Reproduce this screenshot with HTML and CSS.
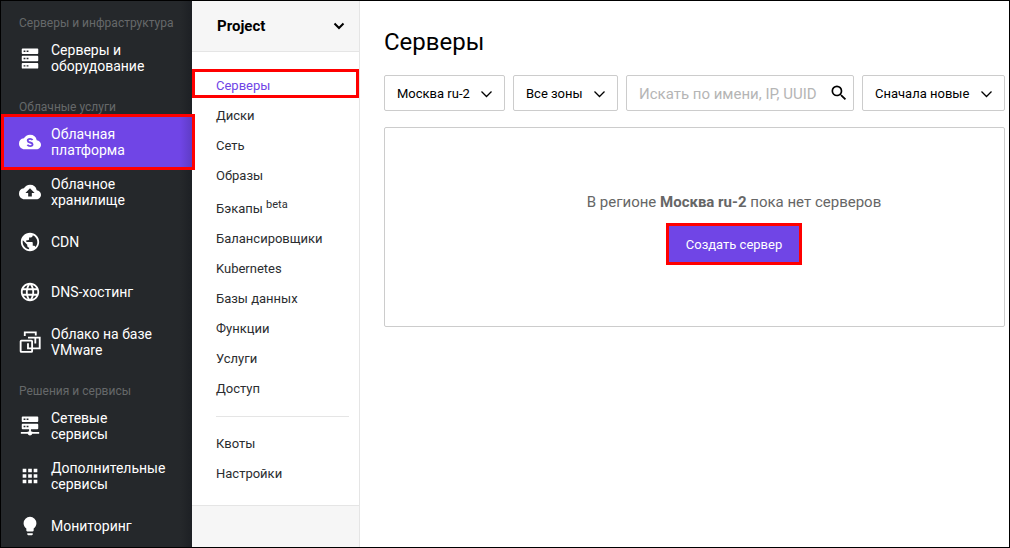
FILE: index.html
```
<!DOCTYPE html>
<html lang="ru">
<head>
<meta charset="utf-8">
<title>Серверы</title>
<link rel="stylesheet" href="styles.css">
</head>
<body>
<div class="app">
  <nav class="sidebar" aria-label="Разделы">
    <h2 class="sidebar-title">Серверы и инфраструктура</h2>
    <a class="side-link" href="#">
      <svg class="side-icon" viewBox="0 0 24 24"><path d="M4 1.500h16a1 1 0 0 1 1 1v4a1 1 0 0 1-1 1H4a1 1 0 0 1-1-1v-4a1 1 0 0 1 1-1zM4 9.500h16a1 1 0 0 1 1 1v4a1 1 0 0 1-1 1H4a1 1 0 0 1-1-1v-4a1 1 0 0 1 1-1zM4 17.500h16a1 1 0 0 1 1 1v4a1 1 0 0 1-1 1H4a1 1 0 0 1-1-1v-4a1 1 0 0 1 1-1z"/><path class="hole" d="M5 3.800h2v1.600H5zM8.300 3.800h2v1.600h-2zM5 11.800h2v1.600H5zM8.300 11.800h2v1.600h-2zM5 19.800h2v1.600H5zM8.300 19.800h2v1.600h-2z"/></svg>
      <span>Серверы и оборудование</span>
    </a>
    <h2 class="sidebar-title">Облачные услуги</h2>
    <a class="side-link side-link-active" href="#" aria-current="true">
      <svg class="side-icon" viewBox="0 0 24 24"><path d="M19.350 10.040A7.490 7.490 0 0 0 12 4C9.110 4 6.600 5.640 5.350 8.040A5.994 5.994 0 0 0 0 14c0 3.310 2.690 6 6 6h13c2.760 0 5-2.240 5-5 0-2.640-2.050-4.780-4.650-4.960z"/><path class="mark" d="M14.800 9.900c-.6-.9-1.600-1.300-2.700-1.300-1.600 0-2.600.8-2.600 1.900 0 2.600 5.300 1.500 5.300 4 0 1.100-1.100 2-2.700 2-1.300 0-2.300-.5-2.900-1.500"/></svg>
      <span>Облачная платформа</span>
    </a>
    <a class="side-link" href="#">
      <svg class="side-icon" viewBox="0 0 24 24"><path d="M19.350 10.040A7.490 7.490 0 0 0 12 4C9.110 4 6.600 5.640 5.350 8.040A5.994 5.994 0 0 0 0 14c0 3.310 2.690 6 6 6h13c2.760 0 5-2.240 5-5 0-2.640-2.050-4.780-4.650-4.960zM14 13v4h-4v-4H7l5-5 5 5h-3z"/></svg>
      <span>Облачное хранилище</span>
    </a>
    <a class="side-link" href="#">
      <svg class="side-icon" viewBox="0 0 24 24"><path d="M12 2C6.480 2 2 6.480 2 12s4.480 10 10 10 10-4.480 10-10S17.520 2 12 2zm-1 17.930c-3.950-.49-7-3.850-7-7.930 0-.62.080-1.210.210-1.790L9 15v1c0 1.100.9 2 2 2v1.930zm6.900-2.540c-.26-.81-1-1.390-1.900-1.390h-1v-3c0-.55-.45-1-1-1H8v-2h2c.55 0 1-.45 1-1V7h2c1.100 0 2-.9 2-2v-.41c2.930 1.190 5 4.060 5 7.410 0 2.080-.8 3.970-2.100 5.390z"/></svg>
      <span>CDN</span>
    </a>
    <a class="side-link" href="#">
      <svg class="side-icon" viewBox="0 0 24 24"><path d="M11.990 2C6.470 2 2 6.480 2 12s4.470 10 9.990 10C17.520 22 22 17.520 22 12S17.520 2 11.990 2zm6.930 6h-2.950a15.650 15.650 0 0 0-1.380-3.560A8.030 8.030 0 0 1 18.920 8zM12 4.040c.83 1.200 1.480 2.530 1.910 3.960h-3.820c.43-1.430 1.080-2.760 1.910-3.960zM4.260 14C4.100 13.360 4 12.690 4 12s.1-1.360.26-2h3.380c-.08.66-.14 1.320-.14 2s.06 1.340.14 2H4.260zm.82 2h2.950c.32 1.250.78 2.450 1.380 3.560A7.987 7.987 0 0 1 5.080 16zm2.950-8H5.080a7.987 7.987 0 0 1 4.330-3.560A15.650 15.650 0 0 0 8.030 8zM12 19.960c-.83-1.200-1.480-2.530-1.910-3.960h3.820c-.43 1.430-1.080 2.760-1.910 3.960zM14.340 14H9.660c-.09-.66-.16-1.320-.16-2s.07-1.350.16-2h4.680c.09.65.16 1.320.16 2s-.07 1.340-.16 2zm.25 5.560c.6-1.110 1.060-2.310 1.380-3.560h2.950a8.030 8.030 0 0 1-4.330 3.560zM16.360 14c.08-.66.14-1.320.14-2s-.06-1.340-.14-2h3.380c.16.64.26 1.310.26 2s-.1 1.360-.26 2h-3.380z"/></svg>
      <span>DNS-хостинг</span>
    </a>
    <a class="side-link" href="#">
      <svg class="side-icon" viewBox="0 0 24 24"><g class="line"><path d="M6.300 5.500V1.500H18.300V5"/><rect x="1.800" y="10.500" width="12.500" height="12.300" rx=".8"/><path d="M9.800 7.300H22.600V19H9.800V13.300M17.800 7.300V13.500"/></g></svg>
      <span>Облако на базе VMware</span>
    </a>
    <h2 class="sidebar-title">Решения и сервисы</h2>
    <a class="side-link" href="#">
      <svg class="side-icon" viewBox="0 0 24 24"><path d="M4 1.500h16a1 1 0 0 1 1 1v4a1 1 0 0 1-1 1H4a1 1 0 0 1-1-1v-4a1 1 0 0 1 1-1zM4 9.500h16a1 1 0 0 1 1 1v4a1 1 0 0 1-1 1h-7v2.500h1.500v.5H22v2h-7.500a2.600 2.600 0 0 1-5 0H2v-2h7.500v-.5H11v-2.500H4a1 1 0 0 1-1-1v-4a1 1 0 0 1 1-1z"/><path class="hole" d="M5 3.800h2v1.600H5zM8.300 3.800h2v1.600h-2zM5 11.800h2v1.600H5zM8.300 11.800h2v1.600h-2z"/></svg>
      <span>Сетевые сервисы</span>
    </a>
    <a class="side-link" href="#">
      <svg class="side-icon" viewBox="0 0 24 24"><path d="M4 8h4V4H4v4zm6 12h4v-4h-4v4zm-6 0h4v-4H4v4zm0-6h4v-4H4v4zm6 0h4v-4h-4v4zm6-10v4h4V4h-4zm-6 4h4V4h-4v4zm6 6h4v-4h-4v4zm0 6h4v-4h-4v4z"/></svg>
      <span>Дополнительные сервисы</span>
    </a>
    <a class="side-link" href="#">
      <svg class="side-icon" viewBox="0 0 24 24"><path d="M9 21c0 .55.45 1 1 1h4c.55 0 1-.45 1-1v-1H9v1zm3-19a7 7 0 0 0-7 7c0 2.380 1.190 4.470 3 5.740V17c0 .55.45 1 1 1h6c.55 0 1-.45 1-1v-2.260c1.810-1.270 3-3.360 3-5.740a7 7 0 0 0-7-7z"/></svg>
      <span>Мониторинг</span>
    </a>
  </nav>

  <aside class="project">
    <button class="project-switch" type="button">
      <span>Project</span>
      <svg class="project-arrow" viewBox="0 0 12 12"><path d="M1.500 3.500 6 8l4.500-4.500"/></svg>
    </button>
    <nav class="menu" aria-label="Project">
      <a class="menu-link menu-link-active" href="#" aria-current="page">Серверы</a>
      <a class="menu-link" href="#">Диски</a>
      <a class="menu-link" href="#">Сеть</a>
      <a class="menu-link" href="#">Образы</a>
      <a class="menu-link menu-link-beta" href="#">Бэкапы <sup class="beta">beta</sup></a>
      <a class="menu-link" href="#">Балансировщики</a>
      <a class="menu-link" href="#">Kubernetes</a>
      <a class="menu-link" href="#">Базы данных</a>
      <a class="menu-link" href="#">Функции</a>
      <a class="menu-link" href="#">Услуги</a>
      <a class="menu-link" href="#">Доступ</a>
      <hr class="menu-divider">
      <a class="menu-link" href="#">Квоты</a>
      <a class="menu-link" href="#">Настройки</a>
    </nav>
  </aside>

  <main class="content">
    <h1 class="title">Серверы</h1>
    <div class="filters">
      <div class="field">
        <select class="select" aria-label="Регион"><option>Москва ru-2</option></select>
        <svg class="select-arrow" viewBox="0 0 12 12"><path d="M1.500 3.500 6.500 8.500l5-5"/></svg>
      </div>
      <div class="field">
        <select class="select" aria-label="Зона"><option>Все зоны</option></select>
        <svg class="select-arrow" viewBox="0 0 12 12"><path d="M1.500 3.500 6.500 8.500l5-5"/></svg>
      </div>
      <div class="field field-search">
        <input class="search" type="text" aria-label="Поиск" placeholder="Искать по имени, IP, UUID">
        <svg class="search-icon" viewBox="0 0 24 24"><path d="M15.500 14h-.79l-.28-.27A6.471 6.471 0 0 0 16 9.500 6.500 6.500 0 1 0 9.500 16c1.610 0 3.090-.59 4.230-1.570l.27.280v.79l5 4.990L20.490 19l-4.990-5zm-6 0C7.010 14 5 11.990 5 9.500S7.010 5 9.500 5 14 7.010 14 9.500 11.990 14 9.500 14z"/></svg>
      </div>
      <div class="field">
        <select class="select" aria-label="Сортировка"><option>Сначала новые</option></select>
        <svg class="select-arrow" viewBox="0 0 12 12"><path d="M1.500 3.500 6.500 8.500l5-5"/></svg>
      </div>
    </div>
    <section class="empty">
      <p class="empty-text">В регионе <b>Москва ru-2</b> пока нет серверов</p>
      <button class="create" type="button">Создать сервер</button>
    </section>
  </main>
</div>
</body>
</html>
```
FILE: styles.css
```
* {
  box-sizing: border-box;
}

body {
  margin: 0;
  font-family: Roboto, "Liberation Sans", sans-serif;
  font-size: 13px;
  color: #000;
  background: #fff;
}

a {
  color: inherit;
  text-decoration: none;
}

button,
input,
select {
  font-family: inherit;
}

.app {
  display: grid;
  grid-template-columns: 191px 168px 1fr;
  height: 100vh;
  overflow: hidden;
  border: 1px solid #000;
}

/* Dark navigation */
.sidebar {
  min-height: 0;
  padding-top: 14px;
  color: #fff;
  background: linear-gradient(to left, #1d2024, #25282b 12px);
}

.sidebar-title {
  margin: 0;
  padding: 16px 0 2px 18px;
  font-size: 12px;
  font-weight: 400;
  line-height: 16px;
  color: #66686a;
  white-space: nowrap;
}

.sidebar-title:first-child {
  padding-top: 0;
}

.side-link {
  display: flex;
  align-items: center;
  gap: 10px;
  height: 50px;
  padding: 0 25px 0 18px;
  font-size: 14px;
  line-height: 16px;
}

.side-link-active {
  position: relative;
  background: linear-gradient(to left, #5f3cc6, #7045e6 12px);
}

.side-link-active::after {
  content: "";
  position: absolute;
  inset: -3px -3px -3px 0;
  border: 3px solid #f00;
}

.side-icon {
  flex: none;
  width: 22px;
  height: 22px;
  fill: currentColor;
}

.hole {
  fill: #25282b;
}

.mark {
  fill: none;
  stroke: #7045e6;
  stroke-width: 2;
}

.line {
  fill: none;
  stroke: currentColor;
  stroke-width: 2;
}

/* Project menu */
.project {
  background: #f6f6f6;
  border-right: 1px solid #e5e5e5;
}

.project-switch {
  display: flex;
  align-items: center;
  justify-content: space-between;
  width: 100%;
  height: 51px;
  padding: 0 14px 0 25px;
  font-size: 15px;
  font-weight: 700;
  color: #000;
  background: none;
  border: 0;
  border-bottom: 1px solid #e5e5e5;
}

.project-arrow {
  width: 12px;
  height: 12px;
  fill: none;
  stroke: #000;
  stroke-width: 2;
}

.menu {
  padding: 19px 0 16px;
  background: #fff;
  border-bottom: 1px solid #e5e5e5;
}

.menu-link {
  display: block;
  padding-left: 24px;
  line-height: 30px;
  color: #2b2d30;
}

.menu-link-active {
  position: relative;
  color: #7045e6;
}

.menu-link-active::after {
  content: "";
  position: absolute;
  inset: -2px 0 3px;
  border: 3px solid #f00;
}

.menu-link-beta {
  padding-top: 3px;
}

.beta {
  font-size: 11px;
  line-height: 1;
}

.menu-divider {
  height: 1px;
  margin: 12px 10px 12px 24px;
  border: 0;
  background: #e5e5e5;
}

/* Server list */
.content {
  min-width: 0;
  padding: 25px 4px 0 24px;
}

.title {
  margin: 0 0 17px;
  font-size: 24px;
  font-weight: 400;
  line-height: 32px;
}

.filters {
  display: flex;
  gap: 8px;
}

.field {
  position: relative;
}

.field-search {
  flex: 1;
  min-width: 0;
}

.select,
.search {
  display: block;
  height: 36px;
  border: 1px solid #ccc;
  border-radius: 2px;
  background: #fff;
}

.select {
  appearance: none;
  padding: 0 34px 0 12px;
  font-size: 13px;
  color: #000;
}

.select-arrow {
  position: absolute;
  top: 13px;
  right: 13px;
  width: 12px;
  height: 12px;
  fill: none;
  stroke: #000;
  stroke-width: 1.3;
  pointer-events: none;
}

.search {
  width: 100%;
  padding: 2px 36px 0 12px;
  font-size: 15px;
}

.search::placeholder {
  color: #b5b5b5;
}

.search-icon {
  position: absolute;
  top: 8px;
  right: 5px;
  width: 20px;
  height: 20px;
}

.empty {
  display: flex;
  flex-direction: column;
  align-items: center;
  gap: 14px;
  margin-top: 16px;
  padding: 64px 0 64px 79px;
  border: 1px solid #ccc;
  border-radius: 2px;
}

.empty-text {
  margin: 0;
  font-size: 15px;
  line-height: 20px;
  color: #666;
}

.create {
  height: 36px;
  padding: 0 17px;
  font-size: 13px;
  color: #fff;
  background: #7045e6;
  border: 0;
  outline: 3px solid #f00;
}
```
